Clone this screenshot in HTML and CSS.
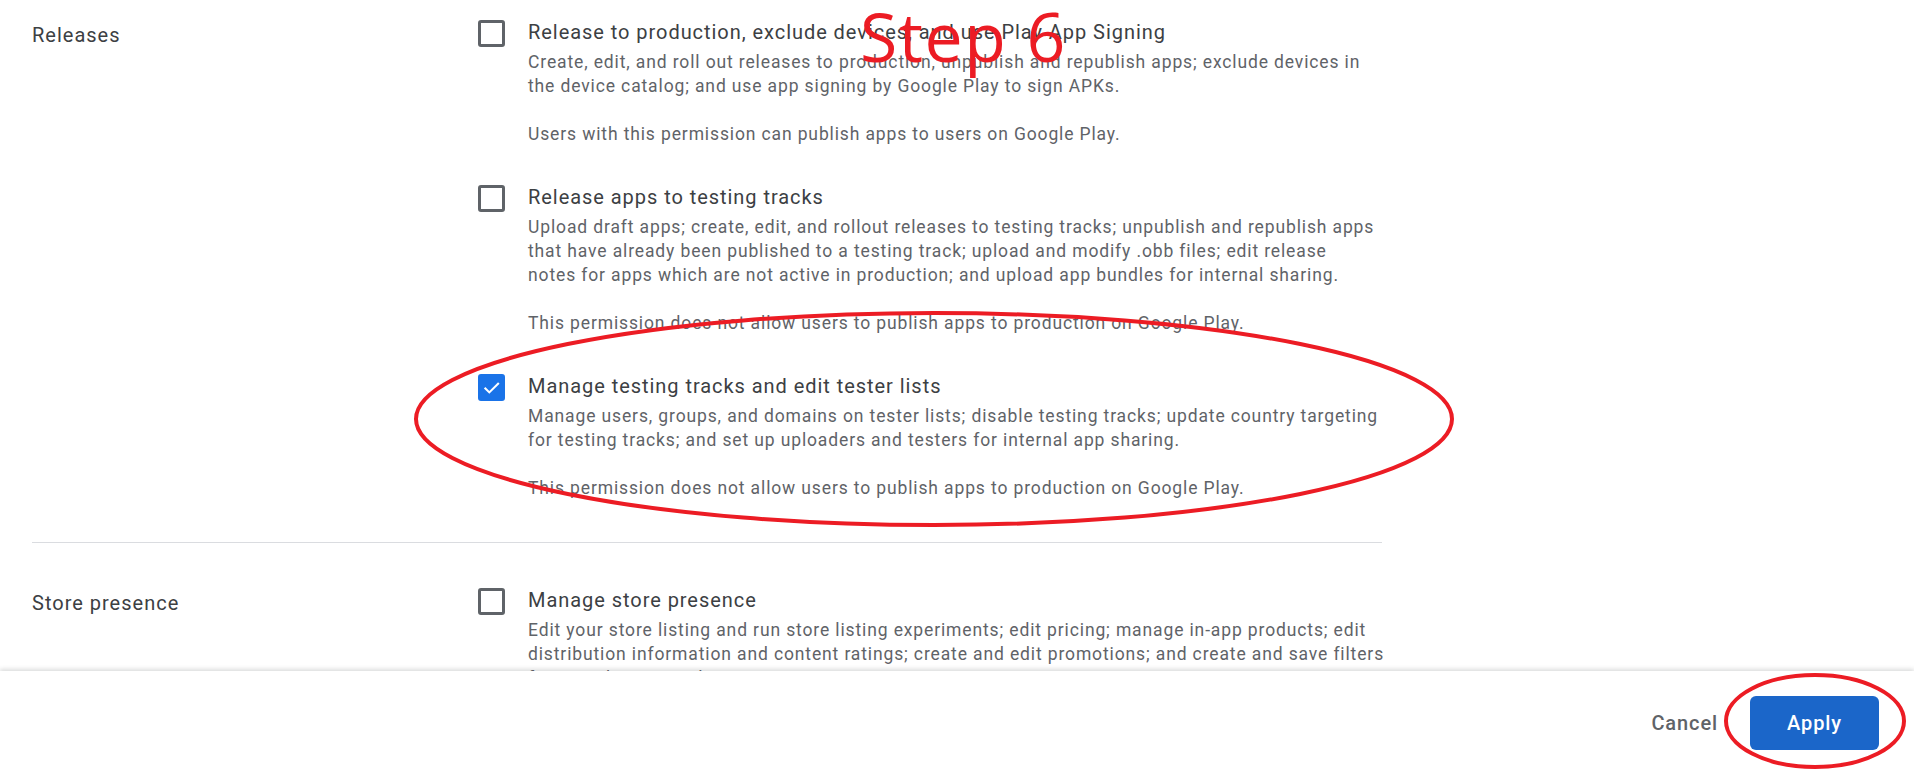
FILE: index.html
```html
<!DOCTYPE html>
<html lang="en">
<head>
<meta charset="utf-8">
<title>Permissions</title>
<link rel="stylesheet" href="styles.css">
</head>
<body>
<div class="page">
  <main class="content">
    <section class="group group-first">
      <div class="group-label">Releases</div>
      <div class="options">
        <div class="option">
          <span class="checkbox"></span>
          <div class="option-text">
            <div class="option-title">Release to production, exclude devices, and use Play App Signing</div>
            <div class="option-desc">Create, edit, and roll out releases to production, unpublish and republish apps; exclude devices in<br>the device catalog; and use app signing by Google Play to sign APKs.</div>
            <div class="option-note">Users with this permission can publish apps to users on Google Play.</div>
          </div>
        </div>
        <div class="option">
          <span class="checkbox"></span>
          <div class="option-text">
            <div class="option-title">Release apps to testing tracks</div>
            <div class="option-desc">Upload draft apps; create, edit, and rollout releases to testing tracks; unpublish and republish apps<br>that have already been published to a testing track; upload and modify .obb files; edit release<br>notes for apps which are not active in production; and upload app bundles for internal sharing.</div>
            <div class="option-note">This permission does not allow users to publish apps to production on Google Play.</div>
          </div>
        </div>
        <div class="option">
          <span class="checkbox checked">
            <svg viewBox="0 0 24 24" class="check"><path d="M5 12.5l4.5 4.5L19.5 7" fill="none" stroke="#fff" stroke-width="2.4" stroke-linecap="square"/></svg>
          </span>
          <div class="option-text">
            <div class="option-title">Manage testing tracks and edit tester lists</div>
            <div class="option-desc">Manage users, groups, and domains on tester lists; disable testing tracks; update country targeting<br>for testing tracks; and set up uploaders and testers for internal app sharing.</div>
            <div class="option-note">This permission does not allow users to publish apps to production on Google Play.</div>
          </div>
        </div>
      </div>
    </section>
    <hr class="divider">
    <section class="group">
      <div class="group-label">Store presence</div>
      <div class="options">
        <div class="option">
          <span class="checkbox"></span>
          <div class="option-text">
            <div class="option-title">Manage store presence</div>
            <div class="option-desc">Edit your store listing and run store listing experiments; edit pricing; manage in-app products; edit<br>distribution information and content ratings; create and edit promotions; and create and save filters<br>for your device catalog.</div>
          </div>
        </div>
      </div>
    </section>
  </main>
  <footer class="actions">
    <button class="btn btn-text">Cancel</button>
    <button class="btn btn-primary">Apply</button>
  </footer>
  <svg class="annotations" viewBox="0 0 1914 772" width="1914" height="772">
    <ellipse cx="934" cy="419" rx="518" ry="106" fill="none" stroke="#ec1c24" stroke-width="4"/>
    <ellipse cx="1815" cy="721" rx="89" ry="46" fill="none" stroke="#ec1c24" stroke-width="4"/>
  </svg>
  <div class="step-label">Step 6</div>
</div>
</body>
</html>
```

FILE: styles.css
```css
* { box-sizing: border-box; }
html, body { margin: 0; padding: 0; background: #fff; }
body {
  font-family: Roboto, "Liberation Sans", sans-serif;
  color: #3c4043;
  width: 1914px;
  height: 772px;
  overflow: hidden;
}
.page {
  position: relative;
  width: 1914px;
  height: 772px;
  display: flex;
  flex-direction: column;
}
.content {
  height: 671px;
  overflow: hidden;
  padding-left: 32px;
}
.group {
  width: 1350px;
  display: grid;
  grid-template-columns: 446px 1fr;
  padding-top: 43px;
  padding-bottom: 42px;
}
.group-first { padding-top: 18px; }
.group-label {
  font-size: 20px;
  letter-spacing: 1px;
  line-height: 28px;
  padding-top: 3px;
  color: #3c4043;
}
.options {
  display: flex;
  flex-direction: column;
  gap: 37px;
}
.option {
  display: flex;
  gap: 23px;
  align-items: flex-start;
}
.checkbox {
  flex: 0 0 27px;
  width: 27px;
  height: 27px;
  margin-top: 2px;
  border: 3px solid #5f6368;
  border-radius: 3px;
  display: flex;
  align-items: center;
  justify-content: center;
}
.checkbox.checked {
  background: #1a73e8;
  border-color: #1a73e8;
}
.check { width: 22px; height: 22px; }
.option-text {
  width: 880px;
  white-space: nowrap;
}
.option-title {
  font-size: 20px;
  letter-spacing: 0.95px;
  line-height: 28px;
  color: #3c4043;
}
.option-desc {
  margin-top: 4px;
  font-size: 17.5px;
  letter-spacing: 0.87px;
  line-height: 24px;
  color: #5f6368;
}
.option-note {
  margin-top: 24px;
  font-size: 17.5px;
  letter-spacing: 0.87px;
  line-height: 24px;
  color: #5f6368;
}
.divider {
  margin: 0;
  width: 1350px;
  border: 0;
  border-top: 1px solid #dadce0;
}
.actions {
  flex: 1;
  position: relative;
  background: #fff;
  box-shadow: 0 -2px 4px rgba(60, 64, 67, 0.18);
  display: flex;
  justify-content: flex-end;
  align-items: center;
  gap: 32px;
  padding-right: 35px;
  padding-top: 2px;
}
.btn {
  font-family: Roboto, "Liberation Sans", sans-serif;
  font-size: 20px;
  font-weight: 500;
  letter-spacing: 0.9px;
  border: 0;
  background: none;
  cursor: pointer;
}
.btn-text {
  color: #5f6368;
  padding: 0;
}
.btn-primary {
  background: #1b66c9;
  color: #fff;
  height: 54px;
  width: 129px;
  border-radius: 6px;
}
.annotations {
  position: absolute;
  left: 0;
  top: 0;
  pointer-events: none;
}
.step-label {
  position: absolute;
  left: 860px;
  top: -6px;
  font-family: "Open Sans", "Noto Sans", sans-serif;
  font-size: 68px;
  letter-spacing: 1.5px;
  color: #ec1c24;
  line-height: 84px;
}
```
